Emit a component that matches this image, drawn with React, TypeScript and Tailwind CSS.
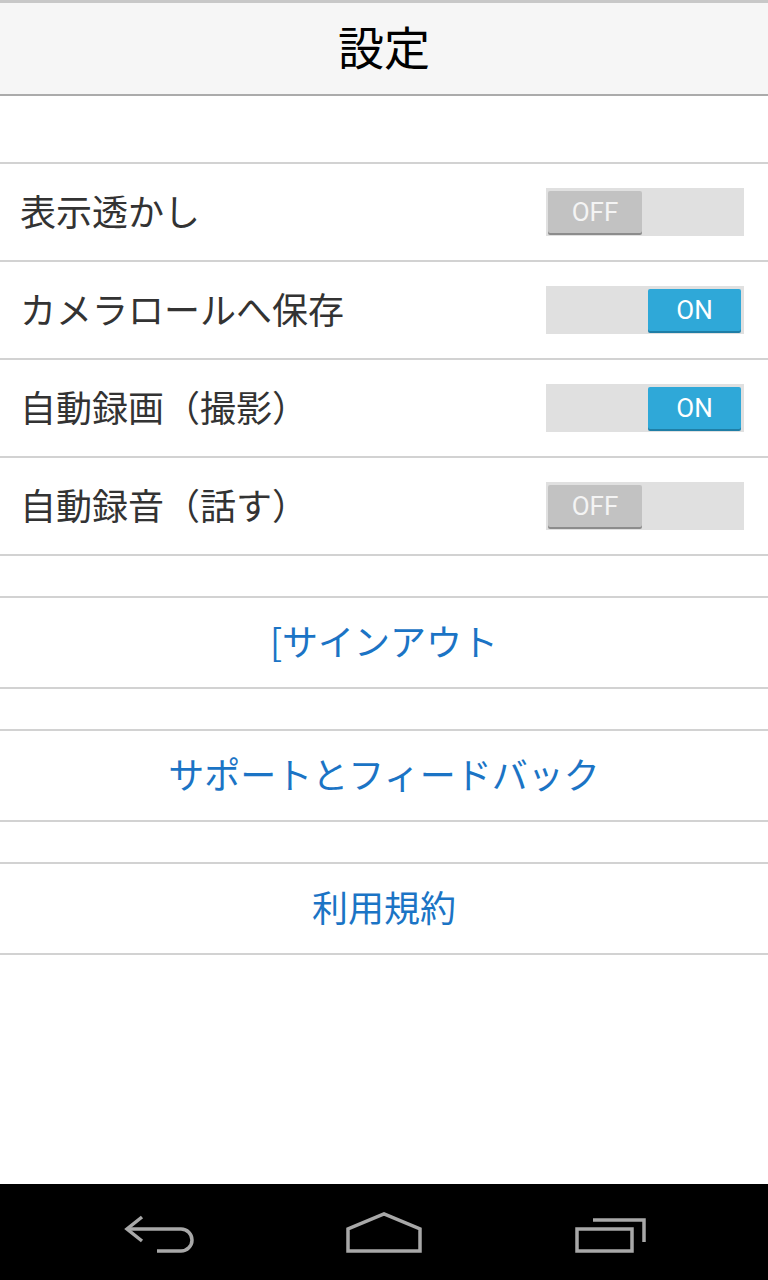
import React from "react";

const cjk = { fontFamily: '"Noto Sans CJK JP", "Noto Sans", sans-serif' };
const roboto = { fontFamily: 'Roboto, "Liberation Sans", sans-serif' };

function Toggle({ on }: { on: boolean }) {
  return (
    <div className={`w-[198px] h-[48px] bg-[#e0e0e0] flex items-center px-[2px] ${on ? "justify-end pr-[3px]" : "justify-start"}`}>
      {on ? (
        <div
          className="w-[93px] h-[42px] bg-[#2fa8d8] rounded-[2px] shadow-[0_2px_0_#1f7ea6] flex items-center justify-center text-white text-[26px]"
          style={roboto}
        >
          ON
        </div>
      ) : (
        <div
          className="w-[94px] h-[42px] bg-[#c2c2c2] rounded-[2px] shadow-[0_2px_0_#8c8c8c] flex items-center justify-center text-[#f4f4f4] text-[26px]"
          style={roboto}
        >
          OFF
        </div>
      )}
    </div>
  );
}

function Row({ label, on, last }: { label: string; on: boolean; last?: boolean }) {
  return (
    <div className={`flex items-center justify-between pl-[20px] pr-[24px] ${last ? "h-[96px]" : "h-[98px] border-b-2 border-[#d2d2d2]"}`}>
      <span className="text-[36px] text-[#333333] leading-none mb-[4px]" style={cjk}>
        {label}
      </span>
      <Toggle on={on} />
    </div>
  );
}

function LinkRow({ label }: { label: string }) {
  return (
    <div className="border-y-2 border-[#d2d2d2] h-[93px] flex items-center justify-center">
      <span className="text-[36px] text-[#1b74c5] leading-none mb-[6px]" style={cjk}>
        {label}
      </span>
    </div>
  );
}

export default function App() {
  return (
    <div className="w-[768px] min-h-[1280px] bg-white flex flex-col" style={cjk}>
      <div className="h-[96px] bg-[#f6f6f6] border-b-2 border-[#ababab] border-t-[3px] border-t-[#c8c8c8] flex items-center justify-center pb-[8px]">
        <span className="text-[46px] text-black leading-none" style={cjk}>
          設定
        </span>
      </div>
      <div className="h-[66px]" />
      <div className="border-y-2 border-[#d2d2d2]">
        <Row label="表示透かし" on={false} />
        <Row label="カメラロールへ保存" on={true} />
        <Row label="自動録画（撮影）" on={true} />
        <Row label="自動録音（話す）" on={false} last />
      </div>
      <div className="h-[40px]" />
      <LinkRow label="[サインアウト" />
      <div className="h-[40px]" />
      <LinkRow label="サポートとフィードバック" />
      <div className="h-[40px]" />
      <LinkRow label="利用規約" />
      <div className="flex-1" />
      <div className="h-[96px] bg-black flex items-start pt-[28px] pl-[124px]">
        <svg width="72" height="42" viewBox="0 0 72 42">
          <path d="M18 5 L3 17 L18 29" fill="none" stroke="#a8a8a8" strokeWidth="3.5" strokeLinejoin="miter" />
          <path d="M3 17 H57 A11 11 0 0 1 57 39 H33" fill="none" stroke="#a8a8a8" strokeWidth="3.5" />
        </svg>
        <svg width="76" height="42" viewBox="0 0 76 42" className="ml-[150px]">
          <path d="M2 39 V17 L38 2 L74 17 V39 Z" fill="none" stroke="#a8a8a8" strokeWidth="3.5" strokeLinejoin="miter" />
        </svg>
        <svg width="74" height="42" viewBox="0 0 74 42" className="ml-[152px]">
          <rect x="3" y="17" width="55" height="22" fill="none" stroke="#a8a8a8" strokeWidth="3.5" />
          <path d="M19 8 H70 V30" fill="none" stroke="#a8a8a8" strokeWidth="3.5" />
        </svg>
      </div>
    </div>
  );
}
